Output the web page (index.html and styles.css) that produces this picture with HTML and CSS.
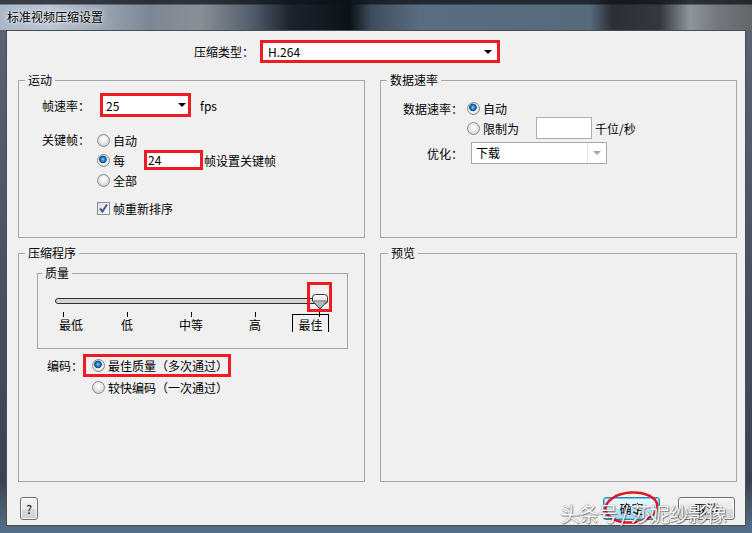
FILE: index.html
```html
<!DOCTYPE html>
<html lang="zh-CN">
  <head>
    <meta charset="UTF-8" />
    <meta name="viewport" content="width=device-width, initial-scale=1.0" />
    <title>标准视频压缩设置</title>
    <link rel="stylesheet" href="styles.css">
  </head>
  <body>
    <div class="window">
      <div class="titlebar">标准视频压缩设置</div>

      <div class="client">
        <!-- Codec type -->
        <div class="codec-row">
          <span class="label">压缩类型：</span>
          <div class="combo marked codec-combo">
            <span>H.264</span>
            <span class="arrow"></span>
          </div>
        </div>

        <div class="groups">
          <!-- Motion -->
          <fieldset class="group">
            <legend>运动</legend>
            <div class="motion">
              <div class="row">
                <span class="label fps-label">帧速率：</span>
                <div class="combo marked fps-combo">
                  <span>25</span>
                  <span class="arrow"></span>
                </div>
                <span class="unit">fps</span>
              </div>
              <div class="row key-row">
                <span class="label key-label">关键帧：</span>
                <div class="options">
                  <label class="option"><span class="radio"></span>自动</label>
                  <label class="option"><span class="radio on"></span>每<span class="marked key-box">24</span>帧设置关键帧</label>
                  <label class="option"><span class="radio"></span>全部</label>
                </div>
              </div>
              <label class="option reorder">
                <span class="check">
                  <svg width="11" height="11" viewBox="0 0 11 11"><path d="M2 5.5 L4.5 8.5 L9 1.5" fill="none" stroke="#3d5a9e" stroke-width="2"/></svg>
                </span>帧重新排序
              </label>
            </div>
          </fieldset>

          <!-- Data rate -->
          <fieldset class="group">
            <legend>数据速率</legend>
            <div class="rate">
              <div class="row">
                <span class="label rate-label">数据速率：</span>
                <label class="option"><span class="radio on"></span>自动</label>
              </div>
              <div class="row">
                <span class="label rate-label"></span>
                <label class="option"><span class="radio"></span>限制为<span class="textbox limit-box"></span>千位/秒</label>
              </div>
              <div class="row optimize-row">
                <span class="label rate-label">优化：</span>
                <div class="combo flat-combo">
                  <span class="combo-text">下载</span>
                  <span class="drop"><span class="arrow gray"></span></span>
                </div>
              </div>
            </div>
          </fieldset>

          <!-- Compressor -->
          <fieldset class="group">
            <legend>压缩程序</legend>
            <fieldset class="quality">
              <legend>质量</legend>
              <div class="slider">
                <div class="track"></div>
                <svg class="thumb" width="18" height="18" viewBox="0 0 18 18">
                  <defs>
                    <linearGradient id="thumbFill" x1="0" y1="0" x2="0" y2="1">
                      <stop offset="0" stop-color="#fafafa"/>
                      <stop offset="0.45" stop-color="#e4e4e4"/>
                      <stop offset="0.5" stop-color="#bdbdbd"/>
                      <stop offset="1" stop-color="#a9a9a9"/>
                    </linearGradient>
                  </defs>
                  <path d="M1.5 4.5 Q1.5 1.5 4.5 1.5 H13.5 Q16.5 1.5 16.5 4.5 V8 L9 16 L1.5 8 Z" fill="url(#thumbFill)" stroke="#3a3a3a"/>
                  <path d="M2.5 8 H15.5" stroke="#6a6a6a"/>
                </svg>
                <div class="thumb-mark"></div>
                <div class="ticks">
                  <div class="tick"><span class="mark"></span><span class="tick-label">最低</span></div>
                  <div class="tick"><span class="mark"></span><span class="tick-label">低</span></div>
                  <div class="tick"><span class="mark"></span><span class="tick-label">中等</span></div>
                  <div class="tick"><span class="mark"></span><span class="tick-label">高</span></div>
                  <div class="tick"><span class="mark"></span><span class="tick-label current">最佳</span></div>
                </div>
              </div>
            </fieldset>
            <div class="encode">
              <span class="label enc-label">编码：</span>
              <div class="options">
                <label class="option marked enc-best"><span class="radio on"></span>最佳质量（多次通过）</label>
                <label class="option enc-fast"><span class="radio"></span>较快编码（一次通过）</label>
              </div>
            </div>
          </fieldset>

          <!-- Preview -->
          <fieldset class="group">
            <legend class="preview-legend">预览</legend>
          </fieldset>
        </div>

        <div class="footer">
          <button class="btn help">?</button>
          <div class="actions">
            <button class="btn default">确定</button>
            <button class="btn">取消</button>
          </div>
        </div>

        <svg class="ok-circle" width="60" height="36" viewBox="0 0 60 36">
          <ellipse cx="28.5" cy="18.5" rx="26" ry="15" fill="none" stroke="#e8141c" stroke-width="2.5" transform="rotate(-4 28.5 18.5)"/>
        </svg>
        <div class="watermark">头条号 / 莎妮纱影像</div>
      </div>
    </div>
  </body>
</html>
```

FILE: styles.css
```css
/* General */
body {
  margin: 0;
  font-family: "Noto Sans CJK SC", "Noto Sans", sans-serif;
  font-size: 12px;
  color: #000;
}

/* Window frame */
.window {
  position: relative;
  width: 752px;
  height: 533px;
  overflow: hidden;
  background: linear-gradient(180deg, #5b6672, #3a434e 90%, #56708a);
}

.titlebar {
  height: 30px;
  box-sizing: border-box;
  padding-left: 7px;
  line-height: 33px;
  font-size: 12px;
  text-shadow: 0 0 6px rgba(255, 255, 255, 0.9), 0 0 2px rgba(255, 255, 255, 0.9);
  background:
    linear-gradient(180deg, rgba(15, 18, 24, 0.75) 0, rgba(15, 18, 24, 0.75) 4px, transparent 5px),
    linear-gradient(90deg, #a9b7c7 0, #bcc6d2 50px, #9aa6b3 100px, #7d8794 150px, #8a8f97 200px,
      #54606d 250px, #1b232d 290px, #0c1219 350px, #3e4d5d 372px, #5a6d80 420px, #566a7c 590px,
      #2b3036 612px, #34383e 660px, #8e969d 690px, #757a7f 715px, #626669 752px);
}

.client {
  position: relative;
  height: 496px;
  margin: 0 6px;
  box-sizing: border-box;
  border: 1px solid #4a4d52;
  background-color: #f0f0f0;
}

/* Shared controls */
.label {
  white-space: nowrap;
  flex: none;
}

.row {
  display: flex;
  align-items: center;
}

.options {
  display: flex;
  flex-direction: column;
}

.option {
  display: flex;
  align-items: center;
  gap: 3px;
  height: 20px;
  white-space: nowrap;
}

.marked {
  border: 3px solid #ed1c24;
  box-sizing: border-box;
}

.combo {
  display: flex;
  align-items: center;
  justify-content: space-between;
  box-sizing: border-box;
  background-color: #fff;
}

.arrow {
  width: 0;
  height: 0;
  border-left: 4px solid transparent;
  border-right: 4px solid transparent;
  border-top: 4px solid #000;
}

.arrow.gray {
  border-top-color: #a6a6a6;
}

.radio {
  flex: none;
  width: 13px;
  height: 13px;
  box-sizing: border-box;
  border: 1px solid #8a8a8a;
  border-radius: 50%;
  background: radial-gradient(circle at 50% 40%, #ffffff 0, #f1f1f1 3px, #d4d4d4 6px);
}

.radio.on {
  background: radial-gradient(circle at 45% 40%, #9ee0ff 0, #2b8fd6 1.5px, #10508f 3.5px, #e8e8e8 4.2px, #ffffff 5px, #d8d8d8 6px);
}

.check {
  flex: none;
  display: flex;
  align-items: center;
  justify-content: center;
  width: 13px;
  height: 13px;
  box-sizing: border-box;
  border: 1px solid #8e8f8f;
  background: linear-gradient(135deg, #dcdcdc, #ffffff);
}

.textbox {
  display: inline-block;
  box-sizing: border-box;
  border: 1px solid #abadb3;
  background-color: #fff;
}

/* Codec row */
.codec-row {
  display: flex;
  align-items: center;
  margin: 9px 0 0 187px;
}

.codec-combo {
  width: 240px;
  height: 23px;
  margin-left: 6px;
  padding: 0 5px 0 5px;
}

/* Group boxes */
.groups {
  display: grid;
  grid-template-columns: 347px 357px;
  grid-template-rows: 165px 236px;
  column-gap: 15px;
  row-gap: 8px;
  margin: 10px 0 0 11px;
}

.group,
.quality {
  margin: 0;
  padding: 0;
  min-width: 0;
  box-sizing: border-box;
  border: 1px solid #a5a5a5;
}

.group legend,
.quality legend {
  margin-left: 6px;
  padding: 0 3px;
  line-height: 14px;
}

.preview-legend {
  margin-left: 7px !important;
}

/* Motion */
.motion {
  padding: 6px 0 0 23px;
}

.fps-label {
  width: 58px;
}

.fps-combo {
  width: 91px;
  height: 24px;
  padding: 0 2px 0 3px;
}

.unit {
  margin-left: 9px;
}

.key-row {
  align-items: flex-start;
  margin-top: 13px;
}

.key-label {
  width: 55px;
  line-height: 20px;
}

.key-box {
  display: inline-block;
  width: 59px;
  height: 20px;
  margin: 0 -2px 0 16px;
  padding-left: 1px;
  line-height: 14px;
  background-color: #fff;
}

.reorder {
  margin: 8px 0 0 55px;
}

/* Data rate */
.rate {
  padding-top: 11px;
}

.rate .row {
  min-height: 20px;
}

.rate-label {
  width: 82px;
  margin-right: 4px;
  text-align: right;
}

.limit-box {
  width: 56px;
  height: 22px;
  margin: 0 0 0 14px;
}

.optimize-row {
  margin-top: 4px;
}

.flat-combo {
  width: 136px;
  height: 22px;
  margin-left: 4px;
  border: 1px solid #a9a9a9;
  align-items: stretch;
}

.combo-text {
  padding-left: 4px;
  line-height: 20px;
}

.drop {
  display: flex;
  align-items: center;
  justify-content: center;
  width: 18px;
  border-left: 1px solid #e6e6e6;
}

/* Compressor */
.quality {
  height: 83px;
  margin: 6px 16px 0 18px;
}

.quality legend {
  margin-left: 4px;
}

.slider {
  position: relative;
  padding-top: 18px;
}

.track {
  width: 273px;
  height: 6px;
  margin-left: 17px;
  box-sizing: border-box;
  border: 1px solid #2f2f2f;
  border-radius: 3px;
  background-color: #d4d4d4;
}

.thumb {
  position: absolute;
  left: 273px;
  top: 13px;
}

.thumb-mark {
  position: absolute;
  left: 269px;
  top: 2px;
  width: 25px;
  height: 30px;
  box-sizing: border-box;
  border: 3px solid #ed1c24;
}

.ticks {
  display: flex;
  gap: 24px;
  margin: 8px 0 0 5px;
}

.tick {
  display: flex;
  flex-direction: column;
  align-items: center;
  width: 40px;
}

.mark {
  width: 1px;
  height: 5px;
  background-color: #000;
}

.tick-label {
  margin-top: 1px;
  line-height: 14px;
  white-space: nowrap;
}

.tick:first-child .tick-label {
  margin-left: 16px;
}

.tick-label.current {
  margin: -3px 0 0 -17px;
  padding: 3px 5px 0;
  border: 1px solid #000;
  border-bottom: none;
}

.encode {
  display: flex;
  margin: 5px 0 0 28px;
}

.enc-label {
  width: 36px;
  line-height: 23px;
}

.enc-best {
  width: 148px;
  height: 23px;
  padding: 0 6px;
}

.enc-fast {
  padding-left: 9px;
}

/* Footer buttons */
.footer {
  display: flex;
  justify-content: space-between;
  margin: 15px 10px 0 13px;
}

.actions {
  display: flex;
  gap: 18px;
}

.btn {
  width: 57px;
  height: 23px;
  padding: 0;
  font-family: inherit;
  font-size: 12px;
  color: #000;
  border: 1px solid #707070;
  border-radius: 3px;
  background: linear-gradient(180deg, #f2f2f2 0, #ebebeb 50%, #dddddd 50%, #cfcfcf 100%);
  box-shadow: inset 0 0 0 1px rgba(255, 255, 255, 0.8);
}

.btn.help {
  width: 18px;
}

.btn.default {
  border-color: #3c7fb1;
  background: linear-gradient(180deg, #eaf6fd 0, #d9f0fc 50%, #bee6fd 50%, #a7d9f5 100%);
  box-shadow: inset 0 0 0 1px #48d6f9;
}

/* Screenshot annotations */
.ok-circle {
  position: absolute;
  left: 596px;
  top: 458px;
}

.watermark {
  position: absolute;
  left: 553px;
  top: 470px;
  font-size: 20px;
  line-height: 26px;
  letter-spacing: -1px;
  white-space: nowrap;
  color: #f7f7f7;
  text-shadow: 0 0 1px #6a6a6a, 1px 1px 1px rgba(0, 0, 0, 0.45);
}
```
